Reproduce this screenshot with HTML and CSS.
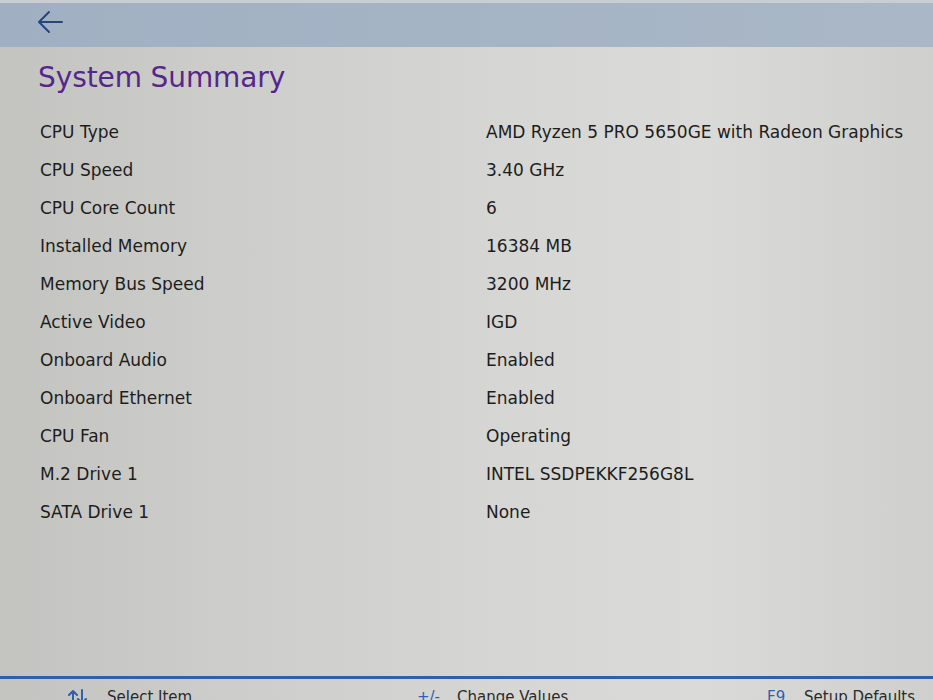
FILE: index.html
```html
<!DOCTYPE html>
<html lang="en">
<head>
<meta charset="utf-8">
<title>System Summary</title>
<link rel="stylesheet" href="styles.css">
</head>
<body>
<div class="screen">
  <header class="topbar">
    <svg class="back" width="28" height="26" viewBox="0 0 28 26" aria-label="Back">
      <path d="M26 13 H3 M13 3 L3 13 L13 23" fill="none" stroke="#24457e" stroke-width="2" stroke-linecap="round" stroke-linejoin="round"/>
    </svg>
  </header>

  <main class="summary">
    <h1 class="title">System Summary</h1>
    <dl class="specs">
      <dt>CPU Type</dt><dd>AMD Ryzen 5 PRO 5650GE with Radeon Graphics</dd>
      <dt>CPU Speed</dt><dd>3.40 GHz</dd>
      <dt>CPU Core Count</dt><dd>6</dd>
      <dt>Installed Memory</dt><dd>16384 MB</dd>
      <dt>Memory Bus Speed</dt><dd>3200 MHz</dd>
      <dt>Active Video</dt><dd>IGD</dd>
      <dt>Onboard Audio</dt><dd>Enabled</dd>
      <dt>Onboard Ethernet</dt><dd>Enabled</dd>
      <dt>CPU Fan</dt><dd>Operating</dd>
      <dt>M.2 Drive 1</dt><dd>INTEL SSDPEKKF256G8L</dd>
      <dt>SATA Drive 1</dt><dd>None</dd>
    </dl>
  </main>

  <footer class="keys">
    <div class="hint hint-wide">
      <span class="key">
        <svg width="22" height="16" viewBox="0 0 22 16" aria-label="Up/Down">
          <path d="M6 15 V2 M2 6 L6 2 L10 6 M15 1 V14 M11 10 L15 14 L19 10" fill="none" stroke="#2f5fae" stroke-width="2" stroke-linecap="round" stroke-linejoin="round"/>
        </svg>
      </span>
      <span class="label">Select Item</span>
    </div>
    <div class="hint hint-wide">
      <span class="key">+/-</span>
      <span class="label">Change Values</span>
    </div>
    <div class="hint">
      <span class="key key-short">F9</span>
      <span class="label">Setup Defaults</span>
    </div>
  </footer>
</div>
</body>
</html>
```

FILE: styles.css
```css
html, body {
  margin: 0;
  padding: 0;
}

body {
  width: 933px;
  height: 700px;
  overflow: hidden;
  font-family: "DejaVu Sans", "Liberation Sans", sans-serif;
  color: #1d1d1d;
}

.screen {
  display: flex;
  flex-direction: column;
  height: 700px;
  background: linear-gradient(90deg, #c3c4c0 0%, #cdcecb 25%, #d6d7d4 55%, #dadbd8 75%, #cfd0cd 100%);
}

/* top navigation strip */
.topbar {
  height: 47px;
  flex: none;
  box-sizing: border-box;
  padding: 6px 0 0 36px;
  background: linear-gradient(90deg, #a0b0c2 0%, #a5b4c5 50%, #a9b7c6 100%);
  border-top: 3px solid #c9ced2;
}

.back {
  display: block;
}

/* page body */
.summary {
  flex: 1;
  padding: 10px 0 0 38px;
}

.title {
  margin: 0 0 14px 0;
  font-size: 28px;
  line-height: 42px;
  font-weight: normal;
  color: #56278a;
  letter-spacing: -0.1px;
}

.specs {
  display: grid;
  grid-template-columns: 448px auto;
  grid-auto-rows: 38px;
  margin: 0;
  font-size: 17px;
  line-height: 38px;
}

.specs dt,
.specs dd {
  margin: 0;
  white-space: nowrap;
}

.specs dt {
  padding-left: 2px;
}

/* key legend */
.keys {
  flex: none;
  height: 12px;
  border-top: 3px solid #2f5fb0;
  display: flex;
  align-items: flex-start;
  padding: 9px 0 0 67px;
  box-sizing: content-box;
  font-size: 15px;
  line-height: 18px;
  color: #2a2a2a;
}

.hint {
  display: flex;
  align-items: center;
}

.hint-wide {
  width: 350px;
}

.key {
  width: 40px;
  color: #2f5fae;
  display: flex;
  align-items: center;
}

.key-short {
  width: 37px;
}
```
